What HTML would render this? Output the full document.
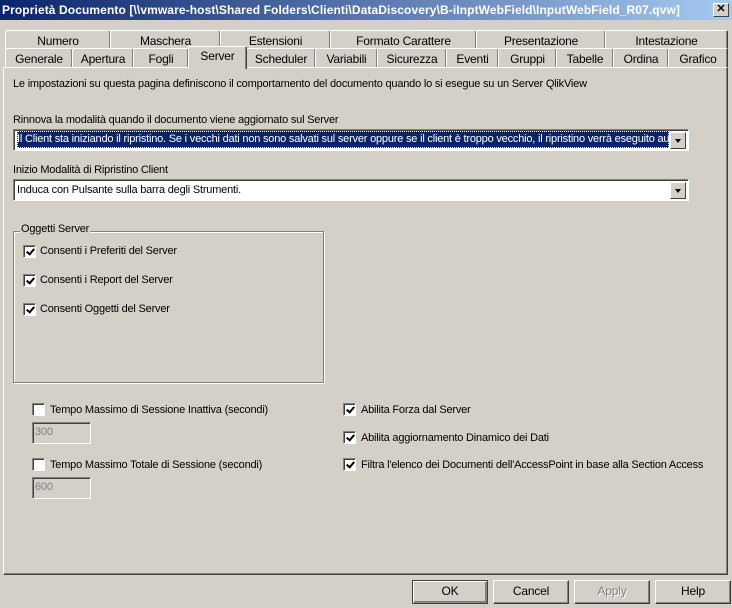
<!DOCTYPE html>
<html><head><meta charset="utf-8"><style>
*{margin:0;padding:0;box-sizing:border-box}
body{width:732px;height:608px;background:#d4d0c8;font-family:"Liberation Sans",Arial,sans-serif;font-size:11px;color:#000;position:relative;overflow:hidden;letter-spacing:-0.2px}
.a{position:absolute;white-space:nowrap}
.title{left:0;top:0;width:732px;height:20px;background:linear-gradient(90deg,#0a246a,#a6caf0);color:#fff;font-weight:bold;font-size:12px;line-height:20px;padding-left:2px;font-family:"Liberation Sans",sans-serif;letter-spacing:0.1px}
.x{position:absolute;right:3px;top:3px;width:16px;height:14px;background:#d4d0c8;border:1px solid;border-color:#fff #404040 #404040 #fff;color:#000;font-size:11px;line-height:11px;text-align:center;font-weight:bold}
.tab{position:absolute;height:19px;border:1px solid;border-color:#fff #404040 transparent #fff;border-bottom:none;border-radius:2px 2px 0 0;text-align:center;line-height:20px;box-shadow:inset -1px 0 #808080}
.panel{left:3px;top:67px;width:725px;height:508px;border:1px solid;border-color:#fff #404040 #404040 #fff;box-shadow:inset -1px -1px #808080}
.combo{position:absolute;height:22px;border:1px solid;border-color:#808080 #fff #fff #808080;box-shadow:inset 1px 1px #404040;background:#fff;line-height:19px;padding-left:3px;overflow:hidden}
.btn{position:absolute;right:2px;top:2px;width:16px;height:17px;background:#d4d0c8;border:1px solid;border-color:#fff #404040 #404040 #fff}
.btn:after{content:"";position:absolute;left:4px;top:6px;border:3px solid transparent;border-top:4px solid #000;border-bottom:0;width:0}
.cb{position:absolute;width:13px;height:13px;background:#fff;border:1px solid;border-color:#808080 #fff #fff #808080;box-shadow:inset 1px 1px #404040}
.cb.c:after{content:"";position:absolute;left:4px;top:1px;width:3px;height:6px;border:solid #000;border-width:0 2px 2px 0;transform:rotate(40deg)}
.group{left:13px;top:231px;width:311px;height:152px;border:1px solid #808080;box-shadow:1px 1px #fff,inset 1px 1px #fff}
.tb{position:absolute;width:59px;height:22px;border:1px solid;border-color:#808080 #fff #fff #808080;box-shadow:inset 1px 1px #404040;color:#808080;line-height:19px;padding-left:2px}
.b{position:absolute;top:580px;width:76px;height:24px;border:1px solid;border-color:#fff #404040 #404040 #fff;box-shadow:inset -1px -1px #808080;text-align:center;line-height:21px;font-size:12px}
</style></head><body>
<div class="a title">Proprietà Documento [\\vmware-host\Shared Folders\Clienti\DataDiscovery\B-iInptWebField\InputWebField_R07.qvw]<div class="x">✕</div></div>

<div class="a panel"></div>

<div class="tab" style="left:5px;top:30px;width:106px;font-size:12px">Numero</div>
<div class="tab" style="left:110px;top:30px;width:111px;font-size:12px">Maschera</div>
<div class="tab" style="left:220px;top:30px;width:111px;font-size:12px">Estensioni</div>
<div class="tab" style="left:330px;top:30px;width:147px;font-size:12px">Formato Carattere</div>
<div class="tab" style="left:476px;top:30px;width:130px;font-size:12px">Presentazione</div>
<div class="tab" style="left:605px;top:30px;width:123px;font-size:12px">Intestazione</div>

<div class="tab" style="left:5px;top:48px;width:68px;font-size:12px;background:#d4d0c8">Generale</div>
<div class="tab" style="left:72px;top:48px;width:62px;font-size:12px">Apertura</div>
<div class="tab" style="left:133px;top:48px;width:56px;font-size:12px">Fogli</div>
<div class="tab" style="left:246px;top:48px;width:70px;font-size:12px">Scheduler</div>
<div class="tab" style="left:315px;top:48px;width:63px;font-size:12px">Variabili</div>
<div class="tab" style="left:377px;top:48px;width:70px;font-size:12px">Sicurezza</div>
<div class="tab" style="left:446px;top:48px;width:53px;font-size:12px">Eventi</div>
<div class="tab" style="left:498px;top:48px;width:59px;font-size:12px">Gruppi</div>
<div class="tab" style="left:556px;top:48px;width:58px;font-size:12px">Tabelle</div>
<div class="tab" style="left:613px;top:48px;width:56px;font-size:12px">Ordina</div>
<div class="tab" style="left:668px;top:48px;width:60px;font-size:12px">Grafico</div>
<div class="tab" style="left:188px;top:46px;width:59px;height:23px;font-size:12px;background:#d4d0c8;z-index:2;line-height:19px">Server</div>

<div class="a" style="left:13px;top:78px">Le impostazioni su questa pagina definiscono il comportamento del documento quando lo si esegue su un Server QlikView</div>
<div class="a" style="left:13px;top:114px">Rinnova la modalità quando il documento viene aggiornato sul Server</div>
<div class="combo" style="left:13px;top:129px;width:676px;background:#fff"><span style="display:block;background:#0a246a;color:#fff;margin:1px 19px 1px 0;height:17px;line-height:17px;outline:1px dotted #fff;outline-offset:-1px;white-space:nowrap;overflow:hidden">Il Client sta iniziando il ripristino. Se i vecchi dati non sono salvati sul server oppure se il client è troppo vecchio, il ripristino verrà eseguito automaticamente</span><div class="btn"></div></div>
<div class="a" style="left:13px;top:164px">Inizio Modalità di Ripristino Client</div>
<div class="combo" style="left:13px;top:179px;width:676px;line-height:20px">Induca con Pulsante sulla barra degli Strumenti.<div class="btn"></div></div>

<div class="a group"></div>
<div class="a" style="left:20px;top:223px;background:#d4d0c8;padding:0 1px">Oggetti Server</div>
<div class="cb c" style="left:23px;top:245px"></div><div class="a" style="left:40px;top:245px">Consenti i Preferiti del Server</div>
<div class="cb c" style="left:23px;top:274px"></div><div class="a" style="left:40px;top:274px">Consenti i Report del Server</div>
<div class="cb c" style="left:23px;top:303px"></div><div class="a" style="left:40px;top:303px">Consenti Oggetti del Server</div>

<div class="cb" style="left:32px;top:403px"></div><div class="a" style="left:50px;top:404px">Tempo Massimo di Sessione Inattiva (secondi)</div>
<div class="tb" style="left:32px;top:422px">300</div>
<div class="cb" style="left:32px;top:458px"></div><div class="a" style="left:50px;top:459px">Tempo Massimo Totale di Sessione (secondi)</div>
<div class="tb" style="left:32px;top:477px">600</div>

<div class="cb c" style="left:343px;top:403px"></div><div class="a" style="left:361px;top:404px">Abilita Forza dal Server</div>
<div class="cb c" style="left:343px;top:431px"></div><div class="a" style="left:361px;top:432px">Abilita aggiornamento Dinamico dei Dati</div>
<div class="cb c" style="left:343px;top:458px"></div><div class="a" style="left:361px;top:459px">Filtra l'elenco dei Documenti dell'AccessPoint in base alla Section Access</div>

<div class="b" style="left:412px;border-color:#404040;box-shadow:inset 1px 1px #fff,inset -2px -2px #808080">OK</div>
<div class="b" style="left:493px">Cancel</div>
<div class="b" style="left:574px;color:#808080;text-shadow:1px 1px #fff">Apply</div>
<div class="b" style="left:655px">Help</div>
</body></html>
